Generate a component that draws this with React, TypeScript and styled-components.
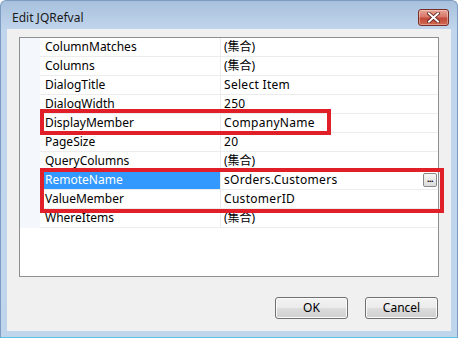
import React from 'react';
import styled, { createGlobalStyle } from 'styled-components';

const GlobalStyle = createGlobalStyle`
  html, body {
    margin: 0;
    padding: 0;
    background: #ffffff;
  }
  body {
    font-family: "Noto Sans", "Noto Sans CJK TC", sans-serif;
  }
`;

const Window = styled.div`
  position: relative;
  width: 458px;
  height: 338px;
  box-sizing: border-box;
  display: flex;
  flex-direction: column;
  border-radius: 6px 6px 0 0;
  border: 1px solid #7b9cc0;
  border-bottom-color: #5bc4e6;
  background: linear-gradient(to bottom, #a7c0dd 0px, #b8cee7 18px, #c1d6ec 29px, #bfd5eb 100%);
`;

const TitleBar = styled.div`
  height: 28px;
  box-sizing: border-box;
  display: flex;
  align-items: flex-start;
  justify-content: space-between;
  padding: 8px 8px 0 11px;
`;

const Title = styled.div`
  font-family: "Noto Sans", sans-serif;
  font-size: 12px;
  line-height: 17px;
  color: #1a1a1a;
`;

const CloseButton = styled.div`
  width: 31px;
  height: 17px;
  box-sizing: border-box;
  border: 1px solid #7a2d27;
  border-radius: 3px;
  background: linear-gradient(to bottom, #e8a594 0%, #d8786a 45%, #c24a3a 55%, #cf6a52 100%);
  display: flex;
  align-items: center;
  justify-content: center;
  box-shadow: inset 0 0 0 1px rgba(255, 255, 255, 0.35);
`;

const Client = styled.div`
  flex: 1;
  margin: 0 6px 6px 6px;
  background: #f0f0f0;
  box-sizing: border-box;
  padding: 8px 12px 12px 12px;
  display: flex;
  flex-direction: column;
`;

const GridPanel = styled.div`
  height: 240px;
  box-sizing: border-box;
  border: 1px solid #8d8f93;
  background: #ffffff;
  display: flex;
  flex-direction: column;
`;

const Row = styled.div`
  display: grid;
  grid-template-columns: 20px 180px 1px 217px;
  height: 19px;
`;

const Margin = styled.div`
  background: #f4f7fc;
`;

const LabelCell = styled.div`
  border-bottom: 1px solid #ececec;
  padding-left: 4px;
  display: flex;
`;

const LabelText = styled.div<{ $selected?: boolean }>`
  flex: 1;
  padding-left: 1px;
  font-size: 12px;
  line-height: 18px;
  white-space: nowrap;
  color: ${(p) => (p.$selected ? '#ffffff' : '#000000')};
  background: ${(p) => (p.$selected ? '#3399ff' : 'transparent')};
`;

const Divider = styled.div`
  background: #ececec;
`;

const ValueCell = styled.div`
  border-bottom: 1px solid #ececec;
  padding-left: 3px;
  display: flex;
  align-items: center;
  justify-content: space-between;
`;

// modified values run a touch wider than the defaults
const ValueText = styled.div<{ $set?: boolean }>`
  font-family: "Noto Sans", "Noto Sans CJK TC", sans-serif;
  font-size: 12px;
  line-height: 18px;
  white-space: nowrap;
  color: #000000;
  letter-spacing: ${(p) => (p.$set ? '0.3px' : '0')};
`;

const EllipsisButton = styled.div`
  width: 14px;
  height: 14px;
  box-sizing: border-box;
  margin-right: 1px;
  border: 1px solid #8a8a8a;
  border-radius: 2px;
  background: linear-gradient(to bottom, #f6f6f6, #dcdcdc);
  font-size: 9px;
  line-height: 10px;
  text-align: center;
  color: #000;
  font-weight: 700;
  letter-spacing: -0.5px;
`;

const ButtonRow = styled.div`
  margin-top: 20px;
  display: flex;
  justify-content: flex-end;
  gap: 17px;
  padding-right: 1px;
`;

const DialogButton = styled.div`
  width: 73px;
  height: 22px;
  box-sizing: border-box;
  border: 1px solid #707070;
  border-radius: 3px;
  background: linear-gradient(to bottom, #f2f2f2 0%, #ebebeb 50%, #dddddd 51%, #cfcfcf 100%);
  box-shadow: inset 0 0 0 1px #fbfbfb;
  font-size: 12px;
  line-height: 20px;
  text-align: center;
  color: #000;
`;

const Highlight = styled.div<{ $left: number; $top: number; $width: number; $height: number }>`
  position: absolute;
  left: ${(p) => p.$left}px;
  top: ${(p) => p.$top}px;
  width: ${(p) => p.$width}px;
  height: ${(p) => p.$height}px;
  box-sizing: border-box;
  border: 4px solid #e01f28;
  pointer-events: none;
`;

type Prop = { name: string; value: string; set?: boolean; selected?: boolean; editor?: boolean };

const props: Prop[] = [
  { name: 'ColumnMatches', value: '(集合)' },
  { name: 'Columns', value: '(集合)' },
  { name: 'DialogTitle', value: 'Select Item', set: true },
  { name: 'DialogWidth', value: '250', set: true },
  { name: 'DisplayMember', value: 'CompanyName', set: true },
  { name: 'PageSize', value: '20', set: true },
  { name: 'QueryColumns', value: '(集合)' },
  { name: 'RemoteName', value: 'sOrders.Customers', set: true, selected: true, editor: true },
  { name: 'ValueMember', value: 'CustomerID', set: true },
  { name: 'WhereItems', value: '(集合)' },
];

const CloseIcon = () => (
  <svg width="13" height="11" viewBox="0 0 13 11">
    <path
      d="M2 1.5 L11 9.5 M11 1.5 L2 9.5"
      stroke="#5a1a14"
      strokeWidth="3.6"
      strokeLinecap="square"
      fill="none"
    />
    <path
      d="M2 1.5 L11 9.5 M11 1.5 L2 9.5"
      stroke="#ffffff"
      strokeWidth="2"
      strokeLinecap="square"
      fill="none"
    />
  </svg>
);

const App: React.FC = () => {
  return (
    <>
      <GlobalStyle />
      <Window>
        <TitleBar>
          <Title>Edit JQRefval</Title>
          <CloseButton>
            <CloseIcon />
          </CloseButton>
        </TitleBar>
        <Client>
          <GridPanel>
            {props.map((p) => (
              <Row key={p.name}>
                <Margin />
                <LabelCell>
                  <LabelText $selected={p.selected}>{p.name}</LabelText>
                </LabelCell>
                <Divider />
                <ValueCell>
                  <ValueText $set={p.set}>{p.value}</ValueText>
                  {p.editor && <EllipsisButton>...</EllipsisButton>}
                </ValueCell>
              </Row>
            ))}
          </GridPanel>
          <ButtonRow>
            <DialogButton>OK</DialogButton>
            <DialogButton>Cancel</DialogButton>
          </ButtonRow>
        </Client>
        <Highlight $left={39} $top={108} $width={291} $height={26} />
        <Highlight $left={39} $top={167} $width={404} $height={45} />
      </Window>
    </>
  );
};

export default App;
